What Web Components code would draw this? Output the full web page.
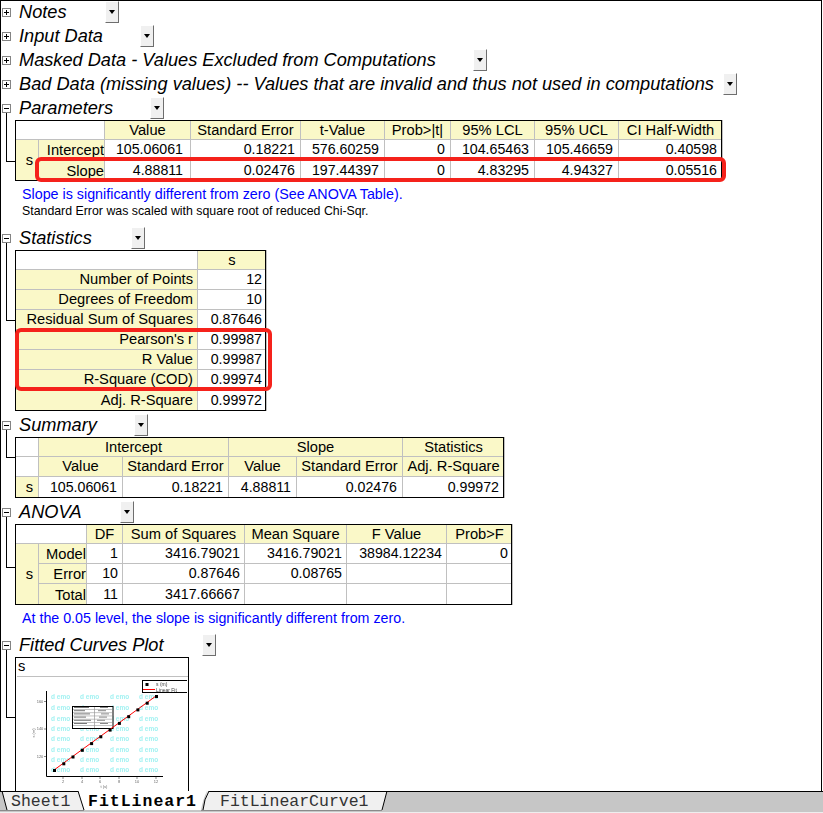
<!DOCTYPE html>
<html>
<head>
<meta charset="utf-8">
<title>FitLinear1</title>
<style>
  html, body { margin: 0; height: 100%; background: #fff; overflow: hidden; }
  body { font-family: "Liberation Sans", Arial, sans-serif; color: #000; }
</style>
</head>
<body>
<report-sheet>
  <report-section title="Notes" drop="105" collapsed></report-section>
  <report-section title="Input Data" drop="140" collapsed></report-section>
  <report-section title="Masked Data - Values Excluded from Computations" drop="473" collapsed></report-section>
  <report-section title="Bad Data (missing values) -- Values that are invalid and thus not used in computations" drop="723" collapsed></report-section>

  <report-section title="Parameters" drop="150" stem="49">
    <report-table id="params" pad="5" cols="23,66,86,110,84,66,84,84,104"></report-table>
    <report-note color="#0000ff" size="14.3" top="5">Slope is significantly different from zero (See ANOVA Table).</report-note>
    <report-note size="12.35" top="1">Standard Error was scaled with square root of reduced Chi-Sqr.</report-note>
    <div style="height:7px"></div>
  </report-section>

  <report-section title="Statistics" drop="131" stem="78">
    <report-table id="stats" cols="182,69"></report-table>
    <div style="height:2px"></div>
  </report-section>

  <report-section title="Summary" drop="134" stem="28">
    <report-table id="summary" pad="5" cols="23,84,106,68,106,102"></report-table>
    <div style="height:2px"></div>
  </report-section>

  <report-section title="ANOVA" drop="120" stem="51">
    <report-table id="anova" cols="23,48,36,122,102,100,66"></report-table>
    <report-note color="#0000ff" size="14.25" top="5">At the 0.05 level, the slope is significantly different from zero.</report-note>
    <div style="height:7px"></div>
  </report-section>

  <report-section title="Fitted Curves Plot" drop="202" stem="68">
    <fit-plot></fit-plot>
  </report-section>
</report-sheet>
<sheet-tabs></sheet-tabs>

<script>
// ── Sheet frame: black rule on top and both sides, tabs sit under it ──
class ReportSheet extends HTMLElement {
  constructor() {
    super();
    this.attachShadow({ mode: 'open' });
    this.shadowRoot.innerHTML = `
      <style>
        :host {
          display: block; box-sizing: border-box; width: 822px; height: 791px; overflow: hidden;
          border: 1px solid #000; border-bottom: 0; background: #fff;
        }
        .inner { margin-top: -1px; }
      </style>
      <div class="inner"><slot></slot></div>
    `;
  }
}

class ReportSection extends HTMLElement {
  constructor() {
    super();
    this.attachShadow({ mode: 'open' });
  }

  connectedCallback() {
    const collapsed = this.hasAttribute('collapsed');
    const title = this.getAttribute('title');
    const drop = +this.getAttribute('drop');
    const stem = this.getAttribute('stem');
    this.removeAttribute('title');
    this.shadowRoot.innerHTML = `
      <style>
        :host { display: block; position: relative; }
        .head { display: flex; align-items: center; height: 24px; position: relative; }
        .toggle {
          box-sizing: border-box; width: 9px; height: 9px; margin-left: 1px; flex: none;
          border: 1px solid #848484; background: #fff; position: relative;
        }
        .toggle::before { content: ''; position: absolute; left: 1px; right: 1px; top: 3px; height: 1px; background: #000; }
        .toggle.plus::after { content: ''; position: absolute; top: 1px; bottom: 1px; left: 3px; width: 1px; background: #000; }
        .title { font: italic 18.2px "Liberation Sans", Arial, sans-serif; margin-left: 8px; white-space: nowrap; }
        .drop {
          position: absolute; top: 1px; box-sizing: border-box; width: 14px; height: 22px;
          background: #f0f0f0; border: 1px solid; border-color: #fff #6e6e6e #6e6e6e #fff;
          display: flex; align-items: center; justify-content: center;
        }
        .drop i { width: 0; height: 0; border: 3.5px solid transparent; border-top: 4px solid #000; border-bottom: 0; }
        .body { padding-left: 14px; }
        .stem {
          position: absolute; left: 5px; top: 17px; width: 10px; box-sizing: border-box;
          border-left: 1px solid #000; border-bottom: 1px solid #000;
        }
      </style>
      <div class="head">
        <span class="toggle ${collapsed ? 'plus' : ''}"></span>
        <span class="title">${title}</span>
        <span class="drop" style="left:${drop - 1}px"><i></i></span>
      </div>
      ${stem ? `<div class="stem" style="height:${+stem}px"></div>` : ''}
      ${collapsed ? '' : '<div class="body"><slot></slot></div>'}
    `;
  }
}

class ReportNote extends HTMLElement {
  constructor() {
    super();
    this.attachShadow({ mode: 'open' });
  }

  connectedCallback() {
    const color = this.getAttribute('color') || '#000';
    const size = this.getAttribute('size') || 12;
    const top = this.getAttribute('top') || 0;
    this.shadowRoot.innerHTML = `
      <style>
        :host { display: block; margin: ${top}px 0 0 7px; color: ${color};
          font: ${size}px/16px "Liberation Sans", Arial, sans-serif; white-space: nowrap; }
      </style>
      <slot></slot>
    `;
  }
}

// rows: array of arrays of cells. cell = {t, c:'h'|'v'|'e', a:'r'|'c', s:colspan, r:rowspan, p:right padding}
class ReportTable extends HTMLElement {
  constructor() {
    super();
    this.attachShadow({ mode: 'open' });
  }

  set model(m) {
    const cols = this.getAttribute('cols').split(',').map(Number);
    const pad = this.getAttribute('pad') || 4;
    const total = cols.reduce((a, b) => a + b, 0);
    const rows = m.rows.map((row, i) => `<tr style="height:${m.heights[i]}px">${row.map(cell => {
      const c = typeof cell === 'string' ? { t: cell } : cell;
      const attrs = (c.s ? ` colspan="${c.s}"` : '') + (c.r ? ` rowspan="${c.r}"` : '')
        + (c.p ? ` style="padding-right:${c.p}px"` : '');
      return `<td class="${c.c || 'v'} ${c.a || 'r'}"${attrs}>${c.t || ''}</td>`;
    }).join('')}</tr>`).join('');
    this.shadowRoot.innerHTML = `
      <style>
        :host { display: block; position: relative; width: ${total}px; }
        table {
          border-collapse: collapse; table-layout: fixed; width: ${total}px;
          font: 14.7px "Liberation Sans", Arial, sans-serif; color: #000;
        }
        td { border: 1px solid #c0c0c0; padding: 0 ${pad}px 1px 0; white-space: nowrap; overflow: hidden; line-height: 16px; }
        .v { background: #fff; font-size: 14.2px; }
        .e { background: #fff; }
        .h { background: #faf8c8; }
        .r { text-align: right; }
        .c { text-align: center; padding: 0 0 1px 0; }
        .lab { background: #faf8c8; text-align: right; padding: 1px 0 0 0; }
        .frame { position: absolute; inset: 0; box-sizing: border-box; border: 1px solid #000; pointer-events: none; }
        .mark {
          position: absolute; box-sizing: border-box; border: 4px solid #f5221b;
          border-radius: 6px; pointer-events: none;
        }
      </style>
      <table>
        <colgroup>${cols.map(w => `<col style="width:${w}px">`).join('')}</colgroup>
        ${rows}
      </table>
      <div class="frame"></div>
      ${(m.marks || []).map(k => `<div class="mark" style="left:${k[0]}px;top:${k[1]}px;width:${k[2]}px;height:${k[3]}px"></div>`).join('')}
    `;
  }
}

const H = (t, s) => ({ t, c: 'h', a: 'c', s });
const L = (t) => ({ t, c: 'lab' });
const S = (r) => ({ t: 's', c: 'h', r, p: 5 });
const E = { t: '', c: 'e' };

// Thumbnail of the fit graph, small and a bit soft like the original
class FitPlot extends HTMLElement {
  constructor() {
    super();
    this.attachShadow({ mode: 'open' });
    const demo = [];
    [20, 31, 41.5, 52, 62, 72.5, 83, 93].forEach(y => {
      [34, 63, 93, 122].forEach(x => {
        demo.push(`<text x="${x}" y="${y + 2}" class="demo">d emo</text>`);
      });
    });
    const pts = [];
    for (let i = 0; i < 12; i++) {
      pts.push(`<rect x="${(36 + i * 9.27).toFixed(1)}" y="${(92 - i * 6.73).toFixed(1)}" width="3" height="3" fill="#000"/>`);
    }
    const rows = [];
    for (let i = 1; i < 7; i++) {
      rows.push(`<rect x="56" y="${29 + i * 3.2}" width="39" height=".7" fill="#aaa"/>`);
      rows.push(`<rect x="57" y="${26.8 + i * 3.2}" width="${10 + (i * 5) % 9}" height="1" fill="#777"/>`);
      rows.push(`<rect x="${80 + (i * 3) % 5}" y="${26.8 + i * 3.2}" width="8" height="1" fill="#888"/>`);
    }
    this.shadowRoot.innerHTML = `
      <style>
        :host {
          display: block; box-sizing: border-box; width: 174px; height: 140px;
          border: 1px solid #000; border-bottom: 0; background: #fff; padding-left: 1px;
        }
        .cap { height: 18px; border-bottom: 1px solid #c0c0c0; font: 14.7px/17px "Liberation Sans", Arial, sans-serif; padding-left: 1px; }
        svg { display: block; }
        .soft { filter: blur(.25px); }
        .demo { font: bold 6.5px "Liberation Sans", Arial, sans-serif; fill: #a4f2f2; }
        .tick { font: 4px "Liberation Sans", Arial, sans-serif; fill: #666; text-anchor: middle; }
        .leg { font: 5px "Liberation Sans", Arial, sans-serif; fill: #444; }
      </style>
      <div class="cap">s</div>
      <svg width="170" height="120" viewBox="0 0 170 120">
        <g class="soft">
          ${demo.join('')}
          <path d="M29.500 14 V99.500 H146" fill="none" stroke="#000" stroke-width="1"/>
          <path d="M27 24.500 h2 M27 52 h2 M27 79.500 h2 M46 100 v2 M65 100 v2 M83 100 v2 M102 100 v2 M120 100 v2 M139 100 v2" stroke="#555" stroke-width=".7"/>
          <text x="23" y="25.500" class="tick">160</text>
          <text x="23" y="53" class="tick">140</text>
          <text x="23" y="80.500" class="tick">120</text>
          <text x="46" y="106" class="tick">2</text>
          <text x="65" y="106" class="tick">4</text>
          <text x="83" y="106" class="tick">6</text>
          <text x="102" y="106" class="tick">8</text>
          <text x="120" y="106" class="tick">10</text>
          <text x="139" y="106" class="tick">12</text>
          <text x="87" y="111" class="tick">t (s)</text>
          <text x="18" y="56" class="tick" transform="rotate(-90 18 56)">s (m)</text>
          <rect x="55.500" y="29.500" width="40.500" height="22" fill="#fff" stroke="#000" stroke-width="1"/>
          ${rows.join('')}
          <rect x="77" y="30" width=".7" height="21" fill="#999"/>
          <path d="M37 93 L139 19" stroke="#f00" stroke-width="1"/>
          ${pts.join('')}
          <rect x="125.500" y="3.500" width="46" height="12" fill="#fff" stroke="#000" stroke-width="1"/>
          <rect x="128.500" y="6" width="3" height="3" fill="#000"/>
          <text x="139" y="9" class="leg">s (m)</text>
          <path d="M126 12.500 h12" stroke="#f00" stroke-width="1"/>
          <text x="139" y="14.500" class="leg">Linear Fit</text>
        </g>
      </svg>
    `;
  }
}

class SheetTabs extends HTMLElement {
  constructor() {
    super();
    this.attachShadow({ mode: 'open' });
    this.shadowRoot.innerHTML = `
      <style>
        :host { display: block; position: relative; height: 22px; background: #c6c6c6; overflow: hidden; }
        svg { position: absolute; left: 0; top: 0; }
        .row { position: relative; height: 22px; font: 16.5px/22px "Liberation Mono", "Courier New", monospace; color: #333; }
        .tab { position: absolute; top: 0; white-space: nowrap; }
        .on { font-weight: 700; color: #000; letter-spacing: 1px; }
      </style>
      <svg width="823" height="22">
        <path d="M0 0 H78 L84 19 H7 L2 0Z" fill="#f0f0f0"/>
        <path d="M207 0 H387 L382 19 H203Z" fill="#f0f0f0"/>
        <path d="M78 0 H207 Q203 8 201 19 H84 Z" fill="#fff"/>
        <path d="M0 .5 H78 M209 .5 H823" stroke="#000"/>
        <path d="M2 0 L7 19 M387 0 L382 19" stroke="#000" fill="none"/>
        <path d="M78 0 L84 19 M209 0 Q204 8 203 19" stroke="#000" fill="none"/>
        <path d="M0 19.500 H84 M201 19.500 H382" stroke="#8a8a8a"/>
        <path d="M0 21.500 H823" stroke="#eeeeee"/>
      </svg>
      <div class="row">
        <span class="tab" style="left:11px">Sheet1</span>
        <span class="tab on" style="left:88px">FitLinear1</span>
        <span class="tab" style="left:220px">FitLinearCurve1</span>
      </div>
    `;
  }
}

customElements.define('report-sheet', ReportSheet);
customElements.define('report-section', ReportSection);
customElements.define('report-note', ReportNote);
customElements.define('report-table', ReportTable);
customElements.define('fit-plot', FitPlot);
customElements.define('sheet-tabs', SheetTabs);

// ── Table contents ──
document.getElementById('params').model = {
  heights: [19, 20, 21],
  rows: [
    [{ t: '', c: 'e', s: 2 }, H('Value'), H('Standard Error'), H('t-Value'), H('Prob&gt;|t|'), H('95% LCL'), H('95% UCL'), H('CI Half-Width')],
    [S(2), L('Intercept'), { t: '105.06061', p: 7 }, '0.18221', '576.60259', '0', '104.65463', '105.46659', '0.40598'],
    [L('Slope'), { t: '4.88811', p: 7 }, '0.02476', '197.44397', '0', '4.83295', '4.94327', '0.05516']
  ],
  marks: [[20, 37, 691, 25]]
};

document.getElementById('stats').model = {
  heights: [19, 20, 20, 20, 20, 20, 20, 21],
  rows: [
    [E, H('s')],
    [{ t: 'Number of Points', c: 'h' }, '12'],
    [{ t: 'Degrees of Freedom', c: 'h' }, '10'],
    [{ t: 'Residual Sum of Squares', c: 'h' }, '0.87646'],
    [{ t: 'Pearson\'s r', c: 'h' }, '0.99987'],
    [{ t: 'R Value', c: 'h' }, '0.99987'],
    [{ t: 'R-Square (COD)', c: 'h' }, '0.99974'],
    [{ t: 'Adj. R-Square', c: 'h' }, '0.99972']
  ],
  marks: [[0, 78, 257, 63]]
};

document.getElementById('summary').model = {
  heights: [19, 20, 21],
  rows: [
    [E, H('Intercept', 2), H('Slope', 2), H('Statistics')],
    [E, H('Value'), H('Standard Error'), H('Value'), H('Standard Error'), H('Adj. R-Square')],
    [S(), '105.06061', '0.18221', '4.88811', '0.02476', '0.99972']
  ]
};

document.getElementById('anova').model = {
  heights: [19, 20, 20, 21],
  rows: [
    [{ t: '', c: 'e', s: 2 }, H('DF'), H('Sum of Squares'), H('Mean Square'), H('F Value'), H('Prob&gt;F')],
    [S(3), L('Model'), '1', '3416.79021', '3416.79021', '38984.12234', '0'],
    [L('Error'), '10', '0.87646', '0.08765', E, E],
    [L('Total'), '11', '3417.66667', E, E, E]
  ]
};
</script>
</body>
</html>
